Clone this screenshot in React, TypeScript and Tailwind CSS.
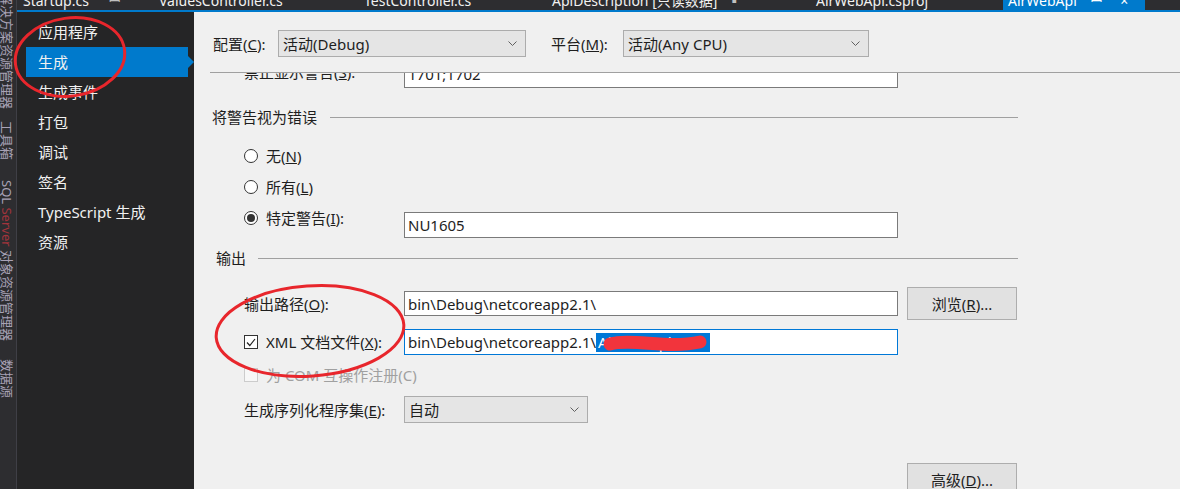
import React from 'react';

const sideItems = ['应用程序', '生成', '生成事件', '打包', '调试', '签名', 'TypeScript 生成', '资源'];

const Chevron = () => (
  <svg width="9" height="6" viewBox="0 0 9 6">
    <path d="M0.5 0.5 L4.5 4.5 L8.5 0.5" stroke="#606060" fill="none" />
  </svg>
);

const Select = ({ value, w }: { value: string; w: string }) => (
  <div className={`${w} h-[27px] border border-[#acacac] bg-[#e5e5e5] flex items-center justify-between pl-[4px] pr-[8px]`}>
    <span>{value}</span>
    <Chevron />
  </div>
);

const Radio = ({ checked }: { checked?: boolean }) => (
  <span className="w-[14px] h-[14px] rounded-full border border-[#333333] bg-white flex items-center justify-center shrink-0">
    {checked && <span className="w-[8px] h-[8px] rounded-full bg-[#333333]" />}
  </span>
);

const Check = ({ checked, disabled }: { checked?: boolean; disabled?: boolean }) => (
  <span
    className={`w-[14px] h-[14px] border flex items-center justify-center shrink-0 ${
      disabled ? 'border-[#cccccc] bg-[#f7f7f7]' : 'border-[#333333] bg-white'
    }`}
  >
    {checked && (
      <svg width="10" height="9" viewBox="0 0 10 9">
        <path d="M1 4.5 L3.8 7.5 L9 1" stroke="#222222" strokeWidth="1.2" fill="none" />
      </svg>
    )}
  </span>
);

const Button = ({ children }: { children: React.ReactNode }) => (
  <div className="w-[110px] h-[33px] border border-[#adadad] bg-[#e1e1e1] flex items-center justify-center shrink-0">
    {children}
  </div>
);

function LeftStrip() {
  return (
    <div className="w-[17px] shrink-0 border-r border-[#3f3f46] bg-[#2d2d30] flex flex-col items-start overflow-hidden text-[13px] leading-[14px] text-[#a8a2b6]">
      <span className="[writing-mode:vertical-rl] [text-orientation:sideways] -mt-[8px]">解决方案资源管理器</span>
      <span className="[writing-mode:vertical-rl] [text-orientation:sideways] mt-[12px]">工具箱</span>
      <span className="[writing-mode:vertical-rl] [text-orientation:sideways] mt-[20px]">
        SQL <span className="text-[#a2343c]">Server</span> 对象资源管理器
      </span>
      <span className="[writing-mode:vertical-rl] [text-orientation:sideways] mt-[18px]">数据源</span>
    </div>
  );
}

function TabBar() {
  return (
    <div className="h-[10px] overflow-hidden flex bg-[#2d2d30] text-[14px] leading-[20px] text-[#f1f1f1]">
      <div className="w-[136px] pl-[6px] flex -mt-[9px]">
        <span>Startup.cs</span>
        <span className="ml-[20px] text-[#c0c0c0]">ꟷ</span>
      </div>
      <div className="w-[205px] pl-[6px] -mt-[9px]">ValuesController.cs</div>
      <div className="w-[188px] pl-[6px] -mt-[9px]">TestController.cs</div>
      <div className="w-[264px] pl-[6px] -mt-[9px] flex">
        <span>ApiDescription [只读数据]</span>
        <span className="ml-[10px] text-[#c0c0c0]">▪</span>
      </div>
      <div className="w-[193px] pl-[6px] -mt-[9px]">AirWebApi.csproj</div>
      <div className="w-[142px] bg-[#007acc] text-white flex">
        <span className="pl-[5px] -mt-[9px]">AirWebApi</span>
        <span className="ml-[14px] -mt-[9px]">ꟷ</span>
        <span className="ml-[18px] -mt-[9px]">×</span>
      </div>
    </div>
  );
}

function Sidebar() {
  return (
    <div className="w-[177px] shrink-0 bg-[#252526] pt-[5px] pl-[9px] text-[#f1f1f1]">
      {sideItems.map((item) => (
        <div
          key={item}
          className={`relative w-[162px] h-[30px] flex items-center pl-[12px] ${item === '生成' ? 'bg-[#007acc]' : ''}`}
        >
          {item}
          {item === '生成' && (
            <span className="absolute -right-[6px] top-[9px] w-0 h-0 border-l-[6px] border-l-[#007acc] border-y-[6px] border-y-transparent" />
          )}
        </div>
      ))}
    </div>
  );
}

function Main() {
  return (
    <div className="flex-1 min-w-0 bg-[#f0f0f0] text-[#1e1e1e] flex flex-col">
      <div className="mt-[18px] ml-[19px] flex items-center">
        <span className="w-[65px]">
          配置(<u>C</u>):
        </span>
        <Select value="活动(Debug)" w="w-[248px]" />
        <span className="ml-[25px] w-[72px]">
          平台(<u>M</u>):
        </span>
        <Select value="活动(Any CPU)" w="w-[246px]" />
      </div>
      <div className="mt-[15px] ml-[16px] h-px bg-[#a0a0a0]" />

      {/* scrolled page: first row is half hidden under the separator */}
      <div className="flex-1 overflow-hidden pl-[16px]">
        <div className="w-[808px] -mt-[15px] flex flex-col">
          <div className="h-[30px] ml-[34px] flex items-start">
            <span className="w-[160px] mt-[4px]">禁止显示警告(<u>S</u>):</span>
            <div className="mt-[4px] w-[494px] h-[26px] border border-[#7a7a7a] bg-white flex items-start pt-[1px] pl-[3px]">1701;1702</div>
          </div>

          <div className="mt-[19px] h-[20px] flex items-center pl-[2px]">
            <span>将警告视为错误</span>
            <div className="flex-1 ml-[13px] h-px bg-[#a0a0a0]" />
          </div>

          <div className="mt-[19px] ml-[34px] h-[20px] flex items-center gap-[8px]">
            <Radio />
            <span>
              无(<u>N</u>)
            </span>
          </div>
          <div className="mt-[11px] ml-[34px] h-[20px] flex items-center gap-[8px]">
            <Radio />
            <span>
              所有(<u>L</u>)
            </span>
          </div>
          <div className="mt-[11px] ml-[34px] flex items-start">
            <div className="w-[160px] h-[20px] flex items-center gap-[8px]">
              <Radio checked />
              <span>
                特定警告(<u>I</u>):
              </span>
            </div>
            <div className="mt-[4px] w-[494px] h-[26px] border border-[#7a7a7a] bg-white flex items-center pl-[3px]">NU1605</div>
          </div>

          <div className="mt-[10px] h-[20px] flex items-center pl-[6px]">
            <span>输出</span>
            <div className="flex-1 ml-[12px] h-px bg-[#a0a0a0]" />
          </div>

          <div className="mt-[19px] ml-[34px] h-[33px] flex items-center">
            <span className="w-[160px]">
              输出路径(<u>O</u>):
            </span>
            <div className="w-[494px] h-[25px] border border-[#7a7a7a] bg-white flex items-center pl-[3px]">
              bin\Debug\netcoreapp2.1\
            </div>
            <div className="ml-[9px]">
              <Button>
                浏览(<u>R</u>)...
              </Button>
            </div>
          </div>

          <div className="mt-[9px] ml-[34px] h-[26px] flex items-center">
            <div className="w-[160px] flex items-center gap-[8px]">
              <Check checked />
              <span>
                XML 文档文件(<u>X</u>):
              </span>
            </div>
            <div className="w-[494px] h-[26px] border border-[#0078d7] bg-white flex items-center pl-[3px]">
              <span>bin\Debug\netcoreapp2.1\</span>
              <span className="bg-[#0078d7] text-white pl-[2px] pr-[8px] leading-[19px]">AirWebApi.xml</span>
            </div>
          </div>

          <div className="mt-[10px] ml-[34px] h-[20px] flex items-center gap-[8px] text-[#a0a0a0]">
            <Check disabled />
            <span>为 COM 互操作注册(C)</span>
          </div>

          <div className="mt-[11px] ml-[34px] h-[27px] flex items-center">
            <span className="w-[160px]">
              生成序列化程序集(<u>E</u>):
            </span>
            <Select value="自动" w="w-[184px]" />
          </div>

          <div className="mt-[40px] flex justify-end pr-[1px]">
            <Button>
              高级(<u>D</u>)...
            </Button>
          </div>
        </div>
      </div>
    </div>
  );
}

function Annotations() {
  return (
    <svg className="absolute inset-0 pointer-events-none" width="1180" height="489" viewBox="0 0 1180 489">
      <path d="M610 344 C 632 338, 667 349, 700 342" stroke="#f2343c" strokeWidth="13" strokeLinecap="round" fill="none" />
      <ellipse cx="70" cy="57" rx="55" ry="39" transform="rotate(-8 70 57)" stroke="#e8262c" strokeWidth="3" fill="none" />
      <ellipse cx="310" cy="331" rx="94" ry="45" transform="rotate(-4 310 331)" stroke="#e8262c" strokeWidth="3" fill="none" />
    </svg>
  );
}

export default function App() {
  return (
    <div className="relative w-[1180px] h-[489px] overflow-hidden flex bg-[#2d2d30] font-['Noto_Sans','Noto_Sans_CJK_SC',sans-serif] text-[15px] leading-[20px]">
      <LeftStrip />
      <div className="flex-1 min-w-0 flex flex-col">
        <TabBar />
        <div className="h-[2px] bg-[#007acc]" />
        <div className="flex-1 min-h-0 flex">
          <Sidebar />
          <Main />
        </div>
      </div>
      <Annotations />
    </div>
  );
}
